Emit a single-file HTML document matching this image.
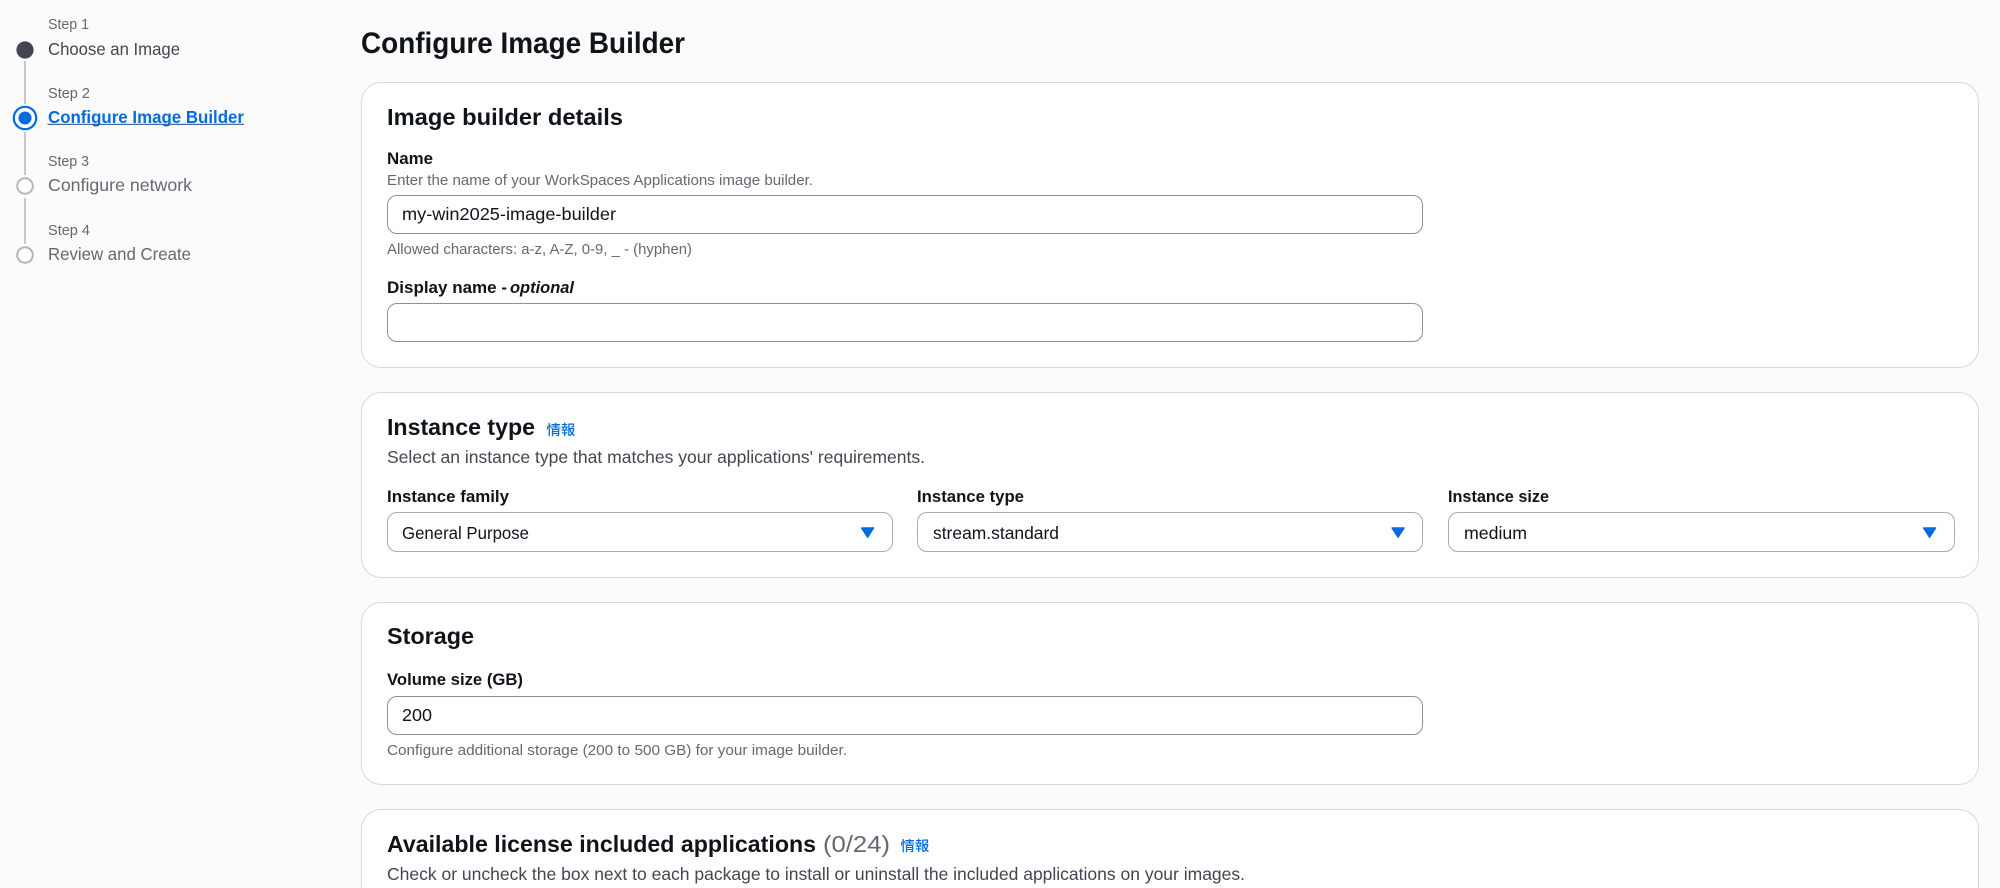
<!DOCTYPE html>
<html lang="en">
<head>
<meta charset="utf-8">
<title>Configure Image Builder</title>
<style>
html,body{margin:0;padding:0;width:2000px;height:888px;overflow:hidden;background:#fbfbfc}
#root{position:relative;width:2000px;height:888px;overflow:hidden;background:#fbfbfc}
.card{position:absolute;left:361px;width:1616px;background:#fff;border:1.5px solid #d8d9dd;border-radius:20px;box-sizing:content-box}
.box{position:absolute;box-sizing:border-box;background:#fff;border:1.5px solid #8f9098;border-radius:10px}
.sel{border-color:#a9abb2;top:512px;height:40px}
svg{position:absolute;left:0;top:0}
text{font-family:"Liberation Sans","Noto Sans CJK JP",sans-serif;white-space:pre}
.s{font-size:15px;fill:#656871}
.n{font-size:17.6px;fill:#424650}
.g{font-size:17.6px;fill:#656871}
.h2{font-size:23.5px;font-weight:700;fill:#0f141a}
.l{font-size:17px;font-weight:700;fill:#0f141a}
.d{font-size:15px;fill:#656871}
.v{font-size:17.6px;fill:#0f141a}
.p{font-size:17.6px;fill:#424650}
.i{font-size:14.4px;font-weight:500;fill:#006ce0;font-family:"Noto Sans CJK JP","Liberation Sans",sans-serif}
</style>
</head>
<body>
<div id="root">
<div class="card" style="top:82px;height:284px"></div>
<div class="card" style="top:392px;height:184px"></div>
<div class="card" style="top:602px;height:181px"></div>
<div class="card" style="top:809px;height:120px"></div>

<div class="box" style="left:387px;top:195px;width:1036px;height:39px"></div>
<div class="box" style="left:387px;top:303px;width:1036px;height:39px"></div>
<div class="box sel" style="left:387px;width:506px"></div>
<div class="box sel" style="left:917px;width:506px"></div>
<div class="box sel" style="left:1448px;width:507px"></div>
<div class="box" style="left:387px;top:696px;width:1036px;height:39px"></div>

<svg width="2000" height="888" viewBox="0 0 2000 888" xmlns="http://www.w3.org/2000/svg">
  <g stroke="#b4b6bc" stroke-width="1.5">
    <line x1="25" y1="61" x2="25" y2="104"/>
    <line x1="25" y1="132" x2="25" y2="175"/>
    <line x1="25" y1="198" x2="25" y2="244"/>
  </g>
  <circle cx="25" cy="50" r="8.6" fill="#424650"/>
  <circle cx="25" cy="118" r="11.2" fill="#fff" stroke="#006ce0" stroke-width="2.2"/>
  <circle cx="25" cy="118" r="6.5" fill="#006ce0"/>
  <circle cx="25" cy="186" r="7.8" fill="#fff" stroke="#b4b6bc" stroke-width="2"/>
  <circle cx="25" cy="255" r="7.8" fill="#fff" stroke="#b4b6bc" stroke-width="2"/>

  <text class="s" x="48" y="29" textLength="41" lengthAdjust="spacingAndGlyphs">Step 1</text>
  <text class="n" x="48" y="55" textLength="132" lengthAdjust="spacingAndGlyphs">Choose an Image</text>
  <text class="s" x="48" y="98" textLength="42" lengthAdjust="spacingAndGlyphs">Step 2</text>
  <text x="48" y="123" textLength="196" lengthAdjust="spacingAndGlyphs" style="font-size:17.6px;font-weight:700;fill:#006ce0">Configure Image Builder</text>
  <rect x="47.5" y="123.8" width="196.5" height="1.1" fill="#33598f"/>
  <text class="s" x="48" y="166" textLength="41" lengthAdjust="spacingAndGlyphs">Step 3</text>
  <text class="g" x="48" y="191" textLength="144" lengthAdjust="spacingAndGlyphs">Configure network</text>
  <text class="s" x="48" y="235" textLength="42" lengthAdjust="spacingAndGlyphs">Step 4</text>
  <text class="g" x="48" y="260" textLength="143" lengthAdjust="spacingAndGlyphs">Review and Create</text>

  <text x="361" y="53" textLength="324" lengthAdjust="spacingAndGlyphs" style="font-size:29.5px;font-weight:700;fill:#0f141a">Configure Image Builder</text>

  <text class="h2" x="387" y="125" textLength="236" lengthAdjust="spacingAndGlyphs">Image builder details</text>
  <text class="l" x="387" y="164" textLength="46" lengthAdjust="spacingAndGlyphs">Name</text>
  <text class="d" x="387" y="185" textLength="426" lengthAdjust="spacingAndGlyphs">Enter the name of your WorkSpaces Applications image builder.</text>
  <text class="v" x="402" y="220" textLength="214" lengthAdjust="spacingAndGlyphs">my-win2025-image-builder</text>
  <text class="d" x="387" y="254" textLength="305" lengthAdjust="spacingAndGlyphs">Allowed characters: a-z, A-Z, 0-9, _ - (hyphen)</text>
  <text class="l" x="387" y="293" textLength="120" lengthAdjust="spacingAndGlyphs">Display name -</text>
  <text class="l" x="510" y="293" textLength="64" lengthAdjust="spacingAndGlyphs" style="font-style:italic">optional</text>

  <text class="h2" x="387" y="435" textLength="148" lengthAdjust="spacingAndGlyphs">Instance type</text>
  <text class="i" x="546.5" y="435">情報</text>
  <text class="p" x="387" y="463" textLength="538" lengthAdjust="spacingAndGlyphs">Select an instance type that matches your applications' requirements.</text>
  <text class="l" x="387" y="502" textLength="122" lengthAdjust="spacingAndGlyphs">Instance family</text>
  <text class="l" x="917" y="502" textLength="107" lengthAdjust="spacingAndGlyphs">Instance type</text>
  <text class="l" x="1448" y="502" textLength="101" lengthAdjust="spacingAndGlyphs">Instance size</text>
  <text class="v" x="402" y="539" textLength="127" lengthAdjust="spacingAndGlyphs">General Purpose</text>
  <text class="v" x="933" y="539" textLength="126" lengthAdjust="spacingAndGlyphs">stream.standard</text>
  <text class="v" x="1464" y="539" textLength="63" lengthAdjust="spacingAndGlyphs">medium</text>
  <g fill="#006ce0" stroke="#006ce0" stroke-width="1.4" stroke-linejoin="round">
    <path d="M861.6 528H873.6L867.6 537.2Z"/>
    <path d="M1392.1 528H1404.1L1398.1 537.2Z"/>
    <path d="M1923.6 528H1935.6L1929.6 537.2Z"/>
  </g>

  <text class="h2" x="387" y="644" textLength="87" lengthAdjust="spacingAndGlyphs">Storage</text>
  <text class="l" x="387" y="685" textLength="136" lengthAdjust="spacingAndGlyphs">Volume size (GB)</text>
  <text class="v" x="402" y="721" textLength="30" lengthAdjust="spacingAndGlyphs">200</text>
  <text class="d" x="387" y="755" textLength="460" lengthAdjust="spacingAndGlyphs">Configure additional storage (200 to 500 GB) for your image builder.</text>

  <text class="h2" x="387" y="852" textLength="429" lengthAdjust="spacingAndGlyphs">Available license included applications</text>
  <text x="823" y="852" textLength="67" lengthAdjust="spacingAndGlyphs" style="font-size:23.5px;fill:#656871">(0/24)</text>
  <text class="i" x="900.5" y="851">情報</text>
  <text class="p" x="387" y="880" textLength="858" lengthAdjust="spacingAndGlyphs">Check or uncheck the box next to each package to install or uninstall the included applications on your images.</text>
</svg>
</div>
</body>
</html>
